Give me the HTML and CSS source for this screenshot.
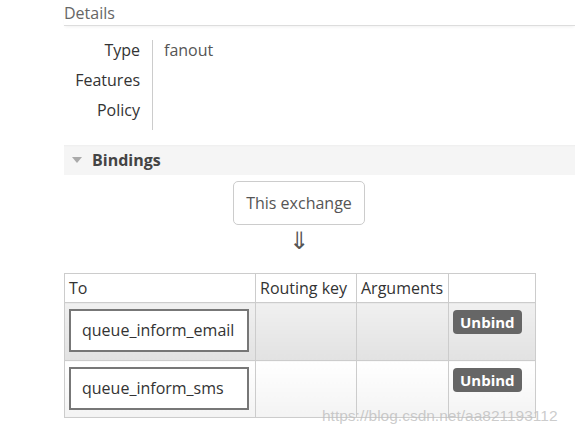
FILE: index.html
```html
<!DOCTYPE html>
<html>
<head>
<meta charset="utf-8">
<link rel="stylesheet" href="styles.css">
</head>
<body>
<div class="page">
  <div class="section-head">Details</div>
  <table class="facts">
    <tr><th>Type</th><td>fanout</td></tr>
    <tr><th>Features</th><td></td></tr>
    <tr><th>Policy</th><td></td></tr>
  </table>

  <div class="bar">
    <span class="tri"></span>
    <span class="bar-title">Bindings</span>
  </div>

  <div class="flow">
    <div class="exchange">This exchange</div>
    <div class="arrow">&#8659;</div>
  </div>

  <table class="bindings">
    <thead>
      <tr><th class="c-to">To</th><th class="c-rk">Routing key</th><th class="c-args">Arguments</th><th class="c-act"></th></tr>
    </thead>
    <tbody>
      <tr class="alt1">
        <td><span class="qbox">queue_inform_email</span></td>
        <td></td><td></td>
        <td><span class="btn">Unbind</span></td>
      </tr>
      <tr class="alt2">
        <td><span class="qbox">queue_inform_sms</span></td>
        <td></td><td></td>
        <td><span class="btn">Unbind</span></td>
      </tr>
    </tbody>
  </table>
</div>
<div class="watermark">https://blog.csdn.net/aa821193112</div>
</body>
</html>
```

FILE: styles.css
```css
html, body {
  margin: 0;
  padding: 0;
  background: #fff;
}
body {
  font-family: "Open Sans", "DejaVu Sans", sans-serif;
  font-size: 16px;
  color: #444;
  width: 575px;
  height: 437px;
  overflow: hidden;
  position: relative;
}
.page {
  margin-left: 64px;
}
.section-head {
  height: 25px;
  line-height: 26px;
  color: #666;
  font-size: 16px;
  border-bottom: 1px solid #ddd;
  box-shadow: 0 2px 3px -1px rgba(0,0,0,0.06);
}
.facts {
  border-collapse: collapse;
  margin-top: 14px;
}
.facts th {
  width: 76px;
  text-align: right;
  font-weight: normal;
  color: #333;
  padding: 0 12px 10px 0;
  line-height: 20px;
  border-right: 1px solid #ccc;
  vertical-align: top;
}
.facts td {
  padding: 0 0 10px 11px;
  line-height: 20px;
  color: #555;
  vertical-align: top;
}
.bar {
  margin-top: 15px;
  height: 30px;
  background: #f5f5f5;
  display: flex;
  align-items: center;
  box-shadow: inset 0 2px 2px -1px rgba(0,0,0,0.03);
}
.tri {
  width: 0;
  height: 0;
  margin-left: 8px;
  border-left: 5px solid transparent;
  border-right: 5px solid transparent;
  border-top: 6px solid #aaa;
}
.bar-title {
  margin-left: 10px;
  font-weight: bold;
  color: #444;
  font-size: 16px;
}
.flow {
  width: 470px;
  display: flex;
  flex-direction: column;
  align-items: center;
  padding-top: 6px;
}
.exchange {
  width: 130px;
  height: 42px;
  line-height: 42px;
  text-align: center;
  border: 1px solid #ccc;
  border-radius: 5px;
  color: #555;
}
.arrow {
  font-family: "DejaVu Sans", sans-serif;
  font-size: 24px;
  line-height: 26px;
  color: #555;
  height: 24px;
  margin-top: 3px;
}
.bindings {
  border-collapse: collapse;
  margin-top: 21px;
  width: 472px;
}
.bindings th, .bindings td {
  border: 1px solid #ccc;
  text-align: left;
  padding: 0 4px;
  vertical-align: top;
}
.bindings th {
  font-weight: normal;
  color: #333;
  height: 28px;
  line-height: 28px;
  padding-top: 0;
  background: #fff;
}
.c-to { width: 182px; }
.c-rk { width: 92px; }
.c-args { width: 83px; }
.bindings td {
  height: 58px;
  padding-top: 6px;
  box-sizing: border-box;
}
.bindings tr.alt2 td {
  height: 57px;
}
.alt1 td {
  background: linear-gradient(#f0f0f0, #e2e2e2);
}
.alt2 td {
  background: linear-gradient(#ffffff, #f3f3f3);
}
.qbox {
  display: block;
  width: 176px;
  height: 39px;
  line-height: 39px;
  border: 2px solid #777;
  background: #fff;
  text-indent: 11px;
  color: #333;
}
.btn {
  display: inline-block;
  background: #666;
  color: #fff;
  font-weight: bold;
  font-size: 15px;
  height: 24px;
  line-height: 24px;
  padding: 0 7px;
  border-radius: 4px;
  margin-top: 1px;
}
.watermark {
  position: absolute;
  left: 322px;
  top: 407px;
  font-family: "Liberation Sans", sans-serif;
  font-size: 15.5px;
  color: rgba(190,190,190,0.8);
}
```
